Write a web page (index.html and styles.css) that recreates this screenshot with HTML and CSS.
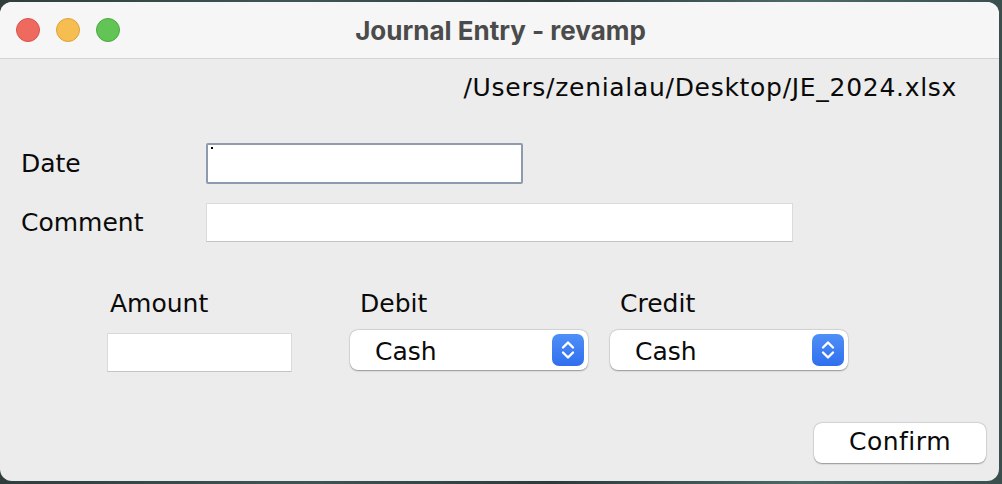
FILE: index.html
```html
<!DOCTYPE html>
<html>
<head>
<meta charset="utf-8">
<link rel="stylesheet" href="styles.css">
</head>
<body>
<div class="window">
  <div class="titlebar">
    <div class="lights">
      <span class="light red"></span>
      <span class="light yellow"></span>
      <span class="light green"></span>
    </div>
    <div class="title">Journal Entry - revamp</div>
  </div>
  <div class="content">
    <div class="path">/Users/zenialau/Desktop/JE_2024.xlsx</div>
    <div class="row row-date">
      <label class="lbl">Date</label>
      <div class="input input-date"><span class="caret-dot"></span></div>
    </div>
    <div class="row row-comment">
      <label class="lbl">Comment</label>
      <div class="input input-comment"></div>
    </div>
    <div class="cols">
      <div class="col col-amount">
        <div class="glbl glbl-amount">Amount</div>
        <div class="input input-amount"></div>
      </div>
      <div class="col col-debit">
        <div class="glbl">Debit</div>
        <div class="select"><span class="sel-text">Cash</span><span class="stepper"><svg width="32" height="32" viewBox="0 0 32 32"><path d="M11 13.5 L16 8.5 L21 13.5" fill="none" stroke="#fff" stroke-width="2.4" stroke-linecap="round" stroke-linejoin="round"/><path d="M11 18.5 L16 23.5 L21 18.5" fill="none" stroke="#fff" stroke-width="2.4" stroke-linecap="round" stroke-linejoin="round"/></svg></span></div>
      </div>
      <div class="col col-credit">
        <div class="glbl">Credit</div>
        <div class="select"><span class="sel-text">Cash</span><span class="stepper"><svg width="32" height="32" viewBox="0 0 32 32"><path d="M11 13.5 L16 8.5 L21 13.5" fill="none" stroke="#fff" stroke-width="2.4" stroke-linecap="round" stroke-linejoin="round"/><path d="M11 18.5 L16 23.5 L21 18.5" fill="none" stroke="#fff" stroke-width="2.4" stroke-linecap="round" stroke-linejoin="round"/></svg></span></div>
      </div>
    </div>
    <div class="actions">
      <button class="btn">Confirm</button>
    </div>
  </div>
</div>
</body>
</html>
```
FILE: styles.css
```css
html, body {
  margin: 0;
  padding: 0;
}
body {
  width: 1002px;
  height: 484px;
  overflow: hidden;
  background: linear-gradient(90deg, #2f3e3c 0%, #3d5654 30%, #2c3b3a 55%, #4a6b68 80%, #3a4f4d 100%);
  font-family: "DejaVu Sans", sans-serif;
  color: #0a0a0a;
}
.window {
  margin-top: 2px;
  width: 999px;
  height: 479px;
  border-radius: 12px;
  background: #ececec;
  overflow: hidden;
}
.titlebar {
  height: 56px;
  background: #f5f6f5;
  border-bottom: 1px solid #d2d2d2;
  display: flex;
  align-items: center;
  position: relative;
}
.lights {
  display: flex;
  gap: 16px;
  padding-left: 16px;
}
.light {
  width: 24px;
  height: 24px;
  border-radius: 50%;
  box-sizing: border-box;
}
.red { background: #ee6a5f; border: 1px solid #d9534a; }
.yellow { background: #f6be50; border: 1px solid #dea23a; }
.green { background: #61c454; border: 1px solid #4ea842; }
.title {
  position: absolute;
  left: 0;
  right: 0;
  top: 14px;
  text-align: center;
  font-family: "Inter", sans-serif;
  font-weight: 700;
  font-size: 26px;
  line-height: 30px;
  color: #4b4b4b;
  padding-left: 2px;
}
.content {
  padding: 15px 13px 0 21px;
}
.path {
  text-align: right;
  font-size: 25px;
  letter-spacing: 0.7px;
  line-height: 28px;
  padding-right: 29px;
}
.row {
  display: flex;
  align-items: center;
}
.row-date { margin-top: 41px; }
.row-comment { margin-top: 19px; }
.lbl {
  width: 185px;
  font-size: 25px;
  line-height: 28px;
}
.input {
  background: #fff;
  box-sizing: border-box;
}
.input-date {
  width: 317px;
  height: 41px;
  border: 2px solid #8e9bae;
  border-radius: 2px;
  position: relative;
}
.caret-dot {
  position: absolute;
  left: 3px;
  top: 2px;
  width: 2px;
  height: 2px;
  background: #000;
}
.input-comment {
  width: 587px;
  height: 39px;
  border: 1px solid #dadada;
  border-bottom-color: #c4c4c4;
}
.cols {
  margin-top: 48px;
  margin-left: 86px;
  display: flex;
  align-items: flex-start;
}
.col {
  display: flex;
  flex-direction: column;
  gap: 12px;
}
.col-amount { width: 185px; }
.col-debit { width: 238px; margin-left: 58px; }
.col-credit { width: 238px; margin-left: 22px; }
.glbl {
  font-size: 25px;
  line-height: 28px;
  padding-left: 10px;
}
.glbl-amount { padding-left: 3px; }
.input-amount {
  margin-top: 3px;
  width: 185px;
  height: 39px;
  border: 1px solid #dadada;
  border-bottom-color: #c4c4c4;
}
.select {
  width: 238px;
  height: 40px;
  box-sizing: border-box;
  background: #fff;
  border-radius: 8px;
  box-shadow: 0 0.5px 1.5px rgba(0,0,0,0.35), 0 0 0 0.5px rgba(0,0,0,0.08);
  display: flex;
  align-items: center;
  justify-content: space-between;
  padding: 0 4px 0 25px;
}
.sel-text {
  font-size: 25px;
  line-height: 28px;
  padding-top: 3px;
}
.stepper {
  width: 32px;
  height: 32px;
  border-radius: 7px;
  background: linear-gradient(180deg, #4f8ff7 0%, #2f6fee 100%);
  display: flex;
}
.actions {
  display: flex;
  justify-content: flex-end;
  margin-top: 51px;
}
.btn {
  width: 172px;
  height: 40px;
  border: none;
  border-radius: 8px;
  background: #fff;
  box-shadow: 0 0.5px 1.5px rgba(0,0,0,0.35), 0 0 0 0.5px rgba(0,0,0,0.08);
  font-family: "DejaVu Sans", sans-serif;
  font-size: 25px;
  letter-spacing: 0.5px;
  color: #0a0a0a;
  padding: 0 0 3px 0;
}
```
